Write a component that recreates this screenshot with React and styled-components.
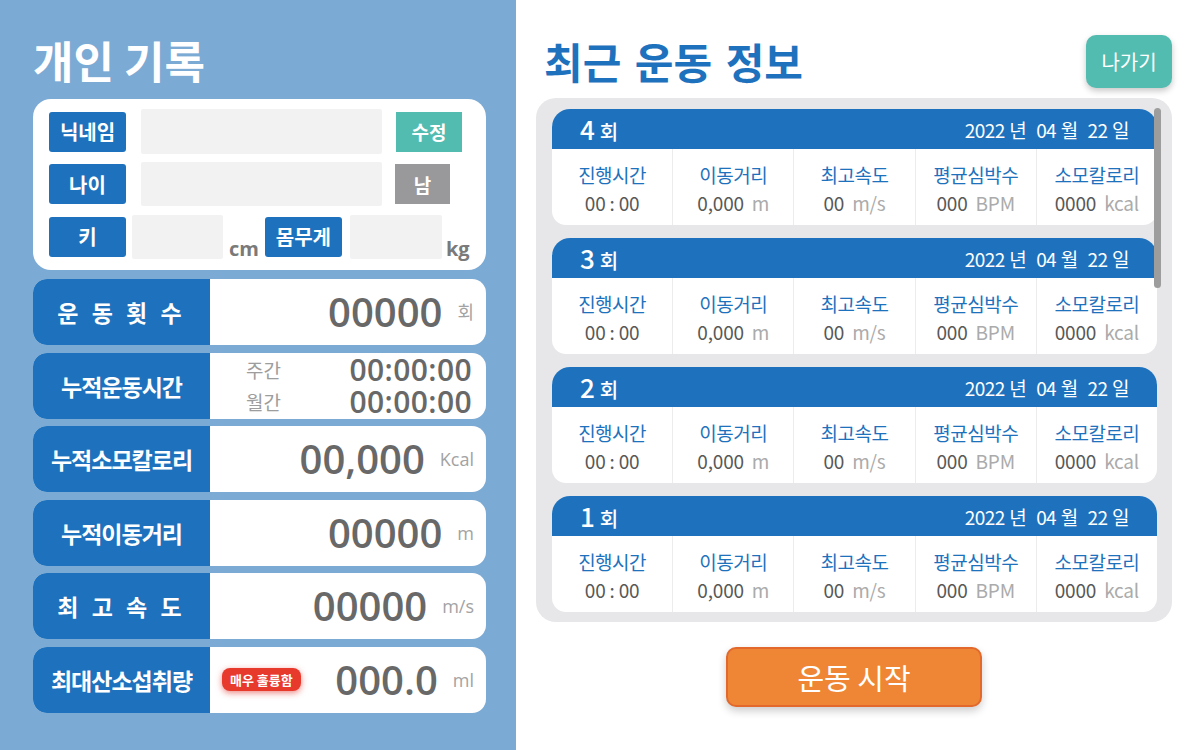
import React from "react";
import styled, { createGlobalStyle } from "styled-components";

const KR = `"Noto Sans CJK KR", "Noto Sans", sans-serif`;
const NUM = `"Open Sans", "Noto Sans CJK KR", sans-serif`;

const GlobalStyle = createGlobalStyle`
  html, body {
    margin: 0;
    padding: 0;
  }
  body {
    font-family: ${KR};
    background: #ffffff;
  }
  #root {
    width: 1200px;
    height: 750px;
    overflow: hidden;
  }
`;

const stats = [
  { label: "운 동 횟 수", spaced: true, value: "00000", unit: "회" },
  { label: "누적운동시간", times: [["주간", "00:00:00"], ["월간", "00:00:00"]] },
  { label: "누적소모칼로리", value: "00,000", unit: "Kcal" },
  { label: "누적이동거리", value: "00000", unit: "m" },
  { label: "최 고 속 도", spaced: true, value: "00000", unit: "m/s" },
  { label: "최대산소섭취량", value: "000.0", unit: "ml", badge: "매우 훌륭함" },
];

const records = [4, 3, 2, 1];

const recordCols = [
  { label: "진행시간", value: "00 : 00", unit: "" },
  { label: "이동거리", value: "0,000", unit: "m" },
  { label: "최고속도", value: "00", unit: "m/s" },
  { label: "평균심박수", value: "000", unit: "BPM" },
  { label: "소모칼로리", value: "0000", unit: "kcal" },
];

function App() {
  return (
    <>
      <GlobalStyle />
      <Page>
        <LeftPanel>
          <TitleWrap>
            <PanelTitle>개인 기록</PanelTitle>
          </TitleWrap>

          <ProfileCard>
            <ProfileRow>
              <FieldLabel>닉네임</FieldLabel>
              <InputBox $w={241} $h={45} $ml={15} />
              <SmallButton $bg="#53bcb0" $w={66} $ml={14}>
                수정
              </SmallButton>
            </ProfileRow>
            <ProfileRow>
              <FieldLabel>나이</FieldLabel>
              <InputBox $w={241} $h={44} $ml={15} />
              <SmallButton $bg="#99999b" $w={55} $ml={13}>
                남
              </SmallButton>
            </ProfileRow>
            <ProfileRow>
              <FieldLabel>키</FieldLabel>
              <InputBox $w={91} $h={44} $ml={6} />
              <FieldUnit $ml={6}>cm</FieldUnit>
              <FieldLabel $ml={6}>몸무게</FieldLabel>
              <InputBox $w={92} $h={44} $ml={8} />
              <FieldUnit $ml={4}>kg</FieldUnit>
            </ProfileRow>
          </ProfileCard>

          <StatList>
            {stats.map((s) => (
              <StatRow key={s.label}>
                <StatLabel $spaced={s.spaced}>{s.label}</StatLabel>
                {s.times ? (
                  <TimeCell>
                    {s.times.map(([k, v]) => (
                      <TimeLine key={k}>
                        <TimeKey>{k}</TimeKey>
                        <TimeValue>{v}</TimeValue>
                      </TimeLine>
                    ))}
                  </TimeCell>
                ) : (
                  <StatValueCell>
                    {s.badge && <Badge>{s.badge}</Badge>}
                    <StatValue>{s.value}</StatValue>
                    <StatUnit>{s.unit}</StatUnit>
                  </StatValueCell>
                )}
              </StatRow>
            ))}
          </StatList>
        </LeftPanel>

        <RightPanel>
          <RightHeader>
            <RecentTitle>최근 운동 정보</RecentTitle>
            <ExitButton>나가기</ExitButton>
          </RightHeader>

          <ListBox>
            <ScrollThumb />
            {records.map((n) => (
              <RecordCard key={n}>
                <RecordHeader>
                  <RoundText>
                    <RoundNum>{n}</RoundNum>
                    <RoundUnit>회</RoundUnit>
                  </RoundText>
                  <DateText>
                    <span>2022 년</span>
                    <span>04 월</span>
                    <span>22 일</span>
                  </DateText>
                </RecordHeader>
                <RecordBody>
                  {recordCols.map((c) => (
                    <RecordCol key={c.label}>
                      <ColLabel>{c.label}</ColLabel>
                      <ColValue>
                        {c.value}
                        {c.unit && <ColUnit>{c.unit}</ColUnit>}
                      </ColValue>
                    </RecordCol>
                  ))}
                </RecordBody>
              </RecordCard>
            ))}
          </ListBox>

          <StartButton>운동 시작</StartButton>
        </RightPanel>
      </Page>
    </>
  );
}

const Page = styled.div`
  display: flex;
  width: 1200px;
  height: 750px;
`;

/* ---------- left ---------- */

const LeftPanel = styled.div`
  width: 516px;
  box-sizing: border-box;
  padding: 0 30px 0 33px;
  background: #7baad4;
  display: flex;
  flex-direction: column;
`;

const TitleWrap = styled.div`
  height: 99px;
  box-sizing: border-box;
  padding-top: 20px;
  display: flex;
  align-items: center;
`;

const PanelTitle = styled.h1`
  margin: 0;
  font-size: 44px;
  line-height: 1;
  font-weight: 700;
  color: #ffffff;
`;

const ProfileCard = styled.div`
  height: 171px;
  box-sizing: border-box;
  padding: 10px 16px 11px;
  background: #ffffff;
  border-radius: 18px;
  display: flex;
  flex-direction: column;
  justify-content: space-between;
`;

const ProfileRow = styled.div`
  display: flex;
  align-items: center;
  height: 45px;
`;

const FieldLabel = styled.div`
  width: 77px;
  height: 40px;
  margin-left: ${(p) => p.$ml || 0}px;
  background: #1e72bd;
  border-radius: 3px;
  color: #ffffff;
  font-size: 20px;
  font-weight: 700;
  display: flex;
  align-items: center;
  justify-content: center;
  flex-shrink: 0;
`;

const InputBox = styled.div`
  width: ${(p) => p.$w}px;
  height: ${(p) => p.$h}px;
  margin-left: ${(p) => p.$ml}px;
  background: #f2f2f2;
  border-radius: 2px;
  flex-shrink: 0;
`;

const SmallButton = styled.div`
  width: ${(p) => p.$w}px;
  height: 40px;
  margin-left: ${(p) => p.$ml}px;
  background: ${(p) => p.$bg};
  color: #ffffff;
  font-size: 19px;
  font-weight: 700;
  display: flex;
  align-items: center;
  justify-content: center;
`;

const FieldUnit = styled.span`
  align-self: flex-end;
  margin-left: ${(p) => p.$ml}px;
  margin-bottom: -2px;
  font-family: ${NUM};
  font-size: 20px;
  font-weight: 700;
  color: #7a7a7a;
  line-height: 1.2;
`;

const StatList = styled.div`
  margin-top: 9px;
  display: flex;
  flex-direction: column;
  gap: 7.6px;
`;

const StatRow = styled.div`
  display: flex;
  height: 66px;
  border-radius: 14px;
  overflow: hidden;
  background: #ffffff;
`;

const StatLabel = styled.div`
  width: 177px;
  flex-shrink: 0;
  background: #1e72bd;
  color: #ffffff;
  font-weight: 700;
  font-size: ${(p) => (p.$spaced ? "23px" : "23px")};
  letter-spacing: ${(p) => (p.$spaced ? "4px" : "-1px")};
  display: flex;
  align-items: center;
  justify-content: center;
  white-space: pre;
`;

const StatValueCell = styled.div`
  flex: 1;
  display: flex;
  align-items: center;
  justify-content: flex-end;
  padding: 0 12px;
`;

const Badge = styled.span`
  margin-right: auto;
  padding: 0 8px;
  height: 23px;
  line-height: 23px;
  border-radius: 8px;
  background: #e8392d;
  color: #ffffff;
  font-size: 13px;
  font-weight: 700;
  box-shadow: 0 2px 6px rgba(220, 40, 30, 0.55);
`;

const StatValue = styled.span`
  font-family: ${NUM};
  font-size: 40px;
  font-weight: 600;
  color: #686868;
  line-height: 1;
`;

const StatUnit = styled.span`
  margin-left: 15px;
  font-family: ${NUM};
  font-size: 18px;
  color: #a3a3a3;
  line-height: 1;
`;

const TimeCell = styled.div`
  flex: 1;
  display: flex;
  flex-direction: column;
  justify-content: center;
  gap: 1px;
  padding: 0 14px 0 36px;
`;

const TimeLine = styled.div`
  display: flex;
  align-items: center;
  justify-content: space-between;
  height: 31px;
`;

const TimeKey = styled.span`
  font-size: 19px;
  line-height: 1;
  color: #9d9d9d;
`;

const TimeValue = styled.span`
  font-family: ${NUM};
  font-size: 30px;
  font-weight: 600;
  color: #686868;
  line-height: 1;
  letter-spacing: 0.4px;
`;

/* ---------- right ---------- */

const RightPanel = styled.div`
  flex: 1;
  box-sizing: border-box;
  padding: 0 28px 0 20px;
  display: flex;
  flex-direction: column;
`;

const RightHeader = styled.div`
  height: 98px;
  box-sizing: border-box;
  padding-top: 35px;
  display: flex;
  align-items: flex-start;
  justify-content: space-between;
`;

const RecentTitle = styled.h2`
  margin: 5px 0 0 8px;
  font-size: 42px;
  line-height: 1;
  font-weight: 700;
  color: #1e72bd;
  word-spacing: 4px;
`;

const ExitButton = styled.div`
  width: 86px;
  height: 53px;
  border-radius: 10px;
  background: #53bcb0;
  color: #ffffff;
  font-size: 20px;
  display: flex;
  align-items: center;
  justify-content: center;
  box-shadow: 0 3px 6px rgba(0, 0, 0, 0.22);
`;

const ListBox = styled.div`
  position: relative;
  padding: 11px 15px 10px 16px;
  background: #e7e7e9;
  border-radius: 20px;
  display: flex;
  flex-direction: column;
  gap: 13px;
`;

const ScrollThumb = styled.div`
  position: absolute;
  top: 10px;
  right: 11px;
  width: 7px;
  height: 180px;
  border-radius: 4px;
  background: #9d9d9d;
  z-index: 2;
`;

const RecordCard = styled.div`
  border-radius: 18px 18px 14px 14px;
  overflow: hidden;
  background: #ffffff;
`;

const RecordHeader = styled.div`
  height: 40px;
  box-sizing: border-box;
  padding: 0 28px;
  background: #1e72bd;
  color: #ffffff;
  display: flex;
  align-items: center;
  justify-content: space-between;
`;

const RoundText = styled.div`
  display: flex;
  align-items: baseline;
  gap: 5px;
`;

const RoundNum = styled.span`
  font-size: 26px;
  font-weight: 500;
  line-height: 1;
`;

const RoundUnit = styled.span`
  font-size: 20px;
  font-weight: 500;
  line-height: 1;
`;

const DateText = styled.span`
  display: flex;
  gap: 10px;
  font-size: 19px;
  letter-spacing: -0.6px;
  word-spacing: 1px;
`;

const RecordBody = styled.div`
  height: 76px;
  display: flex;
`;

const RecordCol = styled.div`
  flex: 1;
  box-sizing: border-box;
  padding-top: 3px;
  display: flex;
  flex-direction: column;
  align-items: center;
  justify-content: center;
  border-left: 1px solid #ececec;
  &:first-child {
    border-left: none;
  }
`;

const ColLabel = styled.span`
  font-size: 19px;
  line-height: 27px;
  color: #1e72bd;
  letter-spacing: -0.5px;
`;

const ColValue = styled.span`
  font-size: 19px;
  line-height: 29px;
  color: #585858;
  letter-spacing: -0.2px;
`;

const ColUnit = styled.span`
  margin-left: 8px;
  color: #ababab;
`;

const StartButton = styled.div`
  align-self: center;
  margin-top: 25px;
  width: 256px;
  height: 60px;
  box-sizing: border-box;
  border: 2px solid #e2692b;
  border-radius: 10px;
  background: #ef8636;
  color: #ffffff;
  font-size: 29px;
  display: flex;
  align-items: center;
  justify-content: center;
  box-shadow: 0 4px 8px rgba(0, 0, 0, 0.2);
`;

export default App;
